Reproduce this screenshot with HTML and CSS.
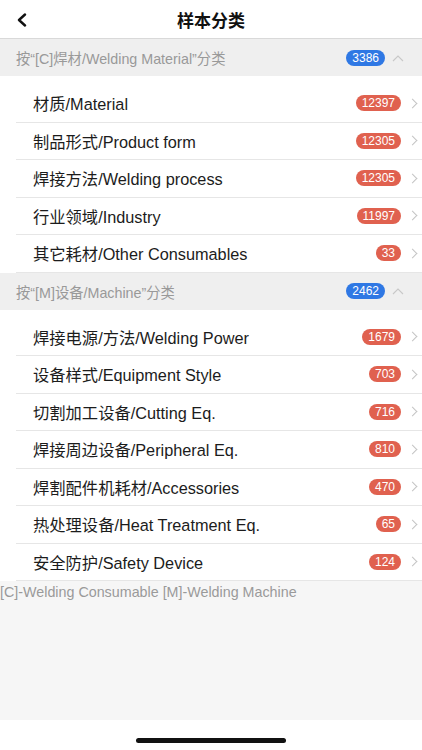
FILE: index.html
```html
<!DOCTYPE html>
<html lang="zh-CN">
<head>
    <meta charset="UTF-8">
    <meta name="viewport" content="width=device-width, initial-scale=1.0">
    <title>样本分类</title>
    <link rel="stylesheet" href="styles.css">
</head>
<body>
    <div class="topbar">
        <a class="back" href="#">
            <svg width="12" height="14" viewBox="0 0 12 14"><path d="M9 1.5 L3 7 L9 12.5" fill="none" stroke="#111" stroke-width="2.4" stroke-linecap="round" stroke-linejoin="round"/></svg>
        </a>
        <h1>样本分类</h1>
    </div>

    <!-- welding material -->
    <div class="group-head">
        <span class="group-title">按“[C]焊材/Welding Material”分类</span>
        <span class="badge blue">3386</span>
        <svg class="caret" width="12" height="8" viewBox="0 0 12 8"><path d="M1 7 L6 2 L11 7" fill="none" stroke="#c8c8c8" stroke-width="1.1"/></svg>
    </div>
    <ul class="list">
        <li class="row"><span class="name">材质/Material</span><span class="badge">12397</span><span class="arrow"></span></li>
        <li class="row"><span class="name">制品形式/Product form</span><span class="badge">12305</span><span class="arrow"></span></li>
        <li class="row"><span class="name">焊接方法/Welding process</span><span class="badge">12305</span><span class="arrow"></span></li>
        <li class="row"><span class="name">行业领域/Industry</span><span class="badge">11997</span><span class="arrow"></span></li>
        <li class="row"><span class="name">其它耗材/Other Consumables</span><span class="badge">33</span><span class="arrow"></span></li>
    </ul>

    <!-- machine -->
    <div class="group-head">
        <span class="group-title">按“[M]设备/Machine”分类</span>
        <span class="badge blue">2462</span>
        <svg class="caret" width="12" height="8" viewBox="0 0 12 8"><path d="M1 7 L6 2 L11 7" fill="none" stroke="#c8c8c8" stroke-width="1.1"/></svg>
    </div>
    <ul class="list">
        <li class="row"><span class="name">焊接电源/方法/Welding Power</span><span class="badge">1679</span><span class="arrow"></span></li>
        <li class="row"><span class="name">设备样式/Equipment Style</span><span class="badge">703</span><span class="arrow"></span></li>
        <li class="row"><span class="name">切割加工设备/Cutting Eq.</span><span class="badge">716</span><span class="arrow"></span></li>
        <li class="row"><span class="name">焊接周边设备/Peripheral Eq.</span><span class="badge">810</span><span class="arrow"></span></li>
        <li class="row"><span class="name">焊割配件机耗材/Accessories</span><span class="badge">470</span><span class="arrow"></span></li>
        <li class="row"><span class="name">热处理设备/Heat Treatment Eq.</span><span class="badge">65</span><span class="arrow"></span></li>
        <li class="row"><span class="name">安全防护/Safety Device</span><span class="badge">124</span><span class="arrow"></span></li>
    </ul>

    <div class="legend">[C]-Welding Consumable [M]-Welding Machine</div>

    <div class="home-bar"><span></span></div>
</body>
</html>
```

FILE: styles.css
```css
body {
    margin: 0;
    width: 422px;
    font-family: "Liberation Sans", "Noto Sans CJK SC", sans-serif;
    color: #222;
    background: #fff;
}
.topbar {
    position: relative;
    height: 38px;
    border-bottom: 1px solid #d9d9d9;
    display: flex;
    align-items: center;
    justify-content: center;
}
.back {
    position: absolute;
    left: 16px;
    top: 13px;
    display: block;
    line-height: 0;
}
.topbar h1 {
    margin: 0;
    font-size: 17px;
    font-weight: bold;
    color: #111;
}
.group-head {
    height: 37px;
    background: #efefef;
    display: flex;
    align-items: center;
    padding: 0 18px 0 16px;
}
.group-title {
    flex: 1;
    font-size: 14.3px;
    color: #999;
}
.badge {
    display: inline-block;
    height: 16px;
    line-height: 16px;
    padding: 0 6px;
    border-radius: 8px;
    background: #e0614f;
    color: #fff;
    font-size: 12px;
}
.badge.blue {
    background: #2f78e4;
}
.caret {
    margin-left: 7px;
}
.list {
    list-style: none;
    margin: 0;
    padding: 9px 0 0 16px;
}
.row {
    height: 37.5px;
    box-sizing: border-box;
    border-bottom: 1px solid #e6e6e6;
    display: flex;
    align-items: center;
    padding: 0 6px 0 17px;
}
.name {
    flex: 1;
    font-size: 16.3px;
    color: #1c1c1c;
}
.arrow {
    width: 6px;
    height: 6px;
    margin-left: 8px;
    border-top: 1px solid #c4c4c4;
    border-right: 1px solid #c4c4c4;
    transform: rotate(45deg);
}
.legend {
    height: 139px;
    background: #f6f6f6;
    font-size: 14.3px;
    color: #9a9a9a;
    padding-top: 3px;
    box-sizing: border-box;
}
.home-bar {
    height: 30px;
    display: flex;
    justify-content: center;
    align-items: flex-start;
}
.home-bar span {
    display: block;
    width: 150px;
    height: 5px;
    margin-top: 18px;
    border-radius: 3px;
    background: #111;
}
```
